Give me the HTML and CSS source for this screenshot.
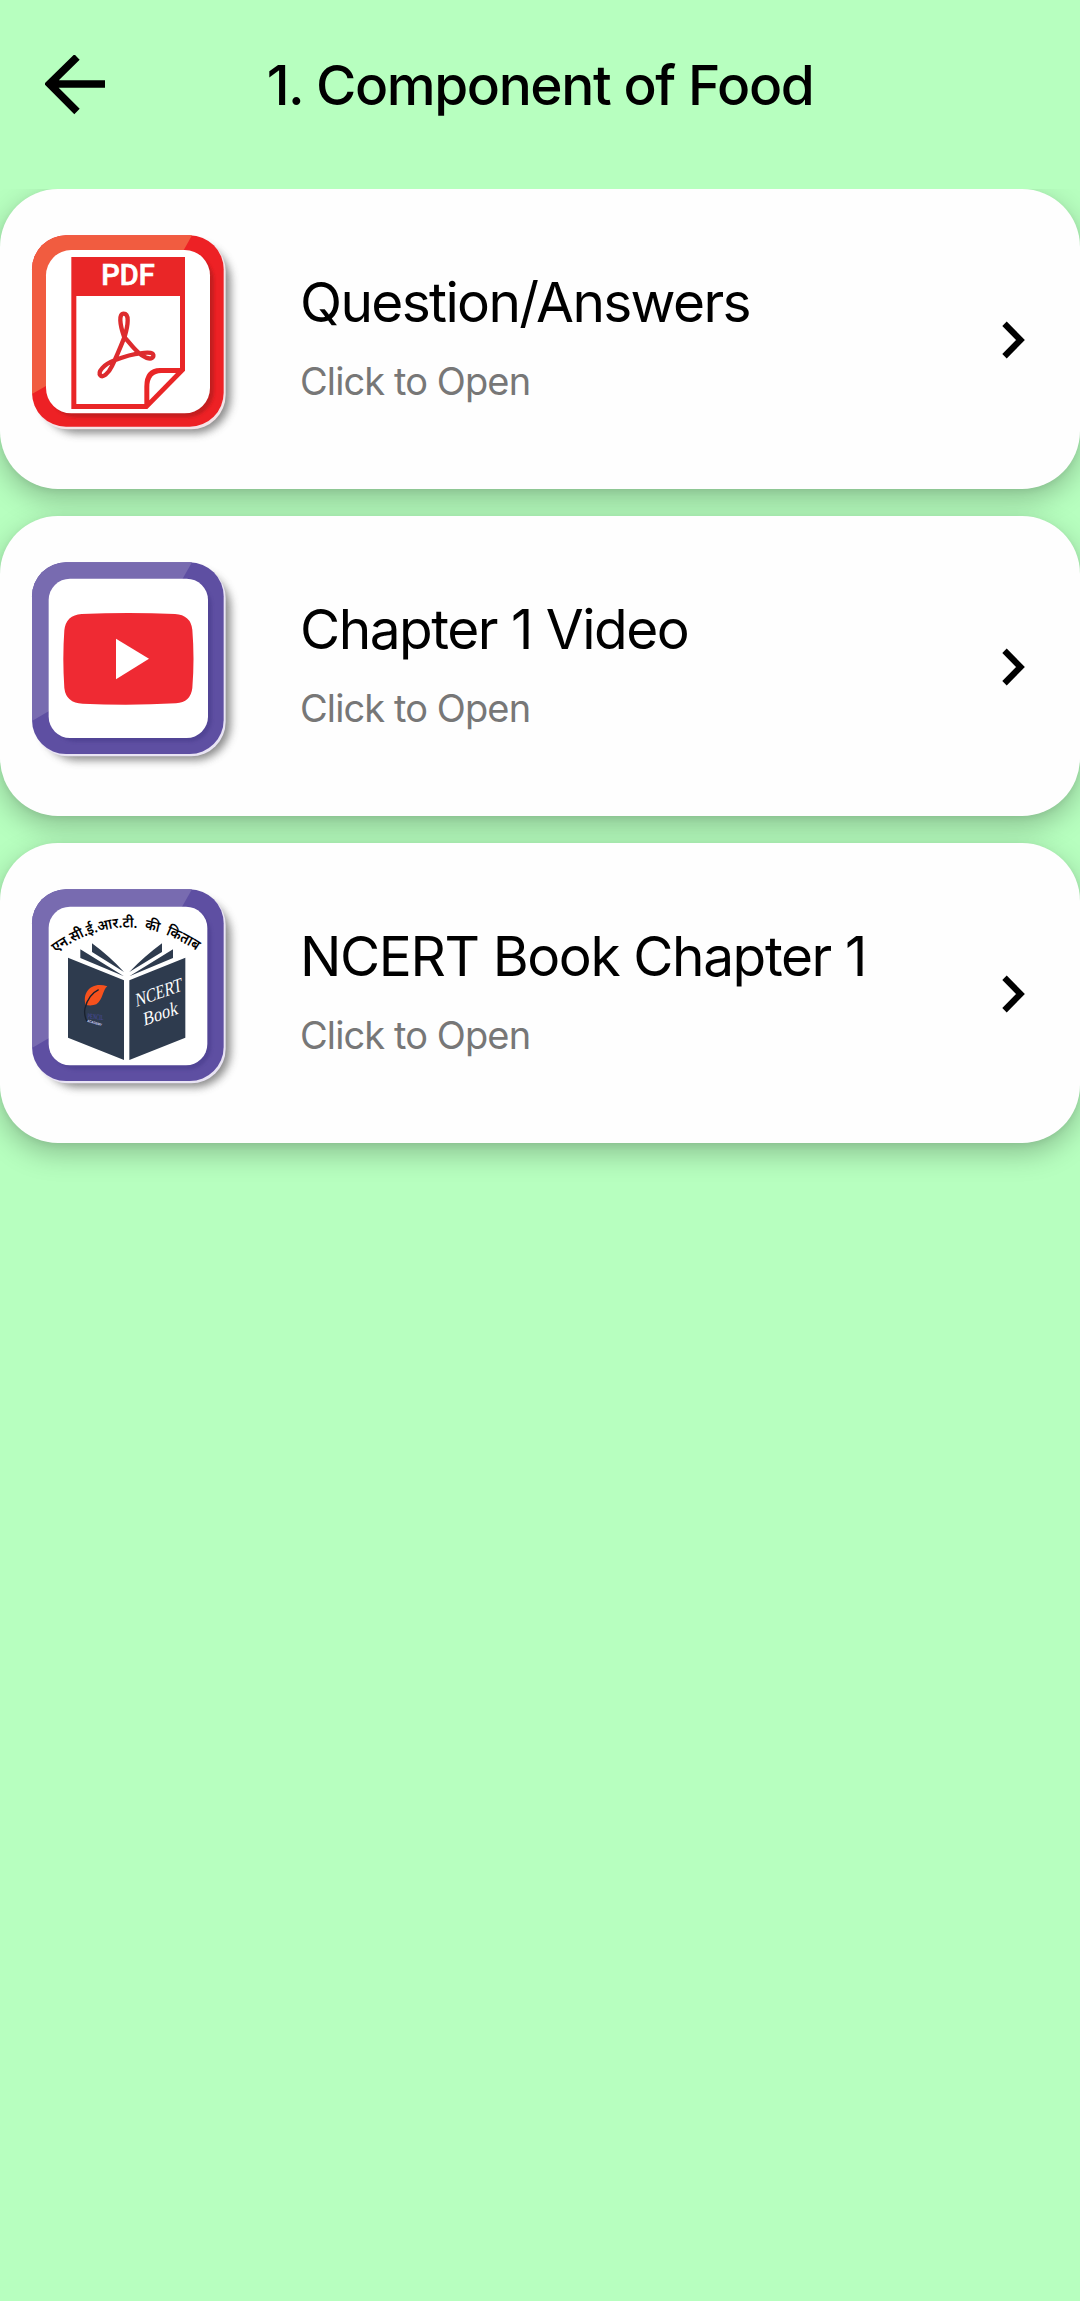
FILE: index.html
```html
<!DOCTYPE html>
<html lang="en">
<head>
<meta charset="utf-8">
<meta name="viewport" content="width=device-width">
<title>1. Component of Food</title>
<link rel="stylesheet" href="styles.css">
</head>
<body>
<header class="bar">
  <svg class="back" viewBox="0 0 60 60"><path d="M32 2 4.500 29 32 56.500M5 29H60" fill="none" stroke="#000" stroke-width="7.600"/></svg>
  <h1 class="title">1. Component of Food</h1>
</header>
<main class="list">
  <a class="card">
    <svg class="icon" viewBox="0 0 690 675">
      <defs>
        <filter id="soft" x="-20%" y="-20%" width="140%" height="140%"><feGaussianBlur stdDeviation="13"/></filter>
        <filter id="inner" x="-20%" y="-20%" width="140%" height="140%"><feGaussianBlur stdDeviation="4"/></filter>
      </defs>
      <rect x="66" y="74" width="566" height="566" rx="108" fill="#777" opacity=".85" filter="url(#soft)"/>
      <rect x="40" y="50" width="577" height="578" rx="104" fill="#f3e4e8"/>
      <rect x="36" y="46" width="575" height="574" rx="102" fill="#ed2125"/>
      <path d="M36 522V148A102 102 0 0 1 138 46H516L490 92 78 498Z" fill="#f15c40"/>
      <rect x="90" y="102" width="492" height="490" rx="80" fill="#b51a1e" filter="url(#inner)" opacity=".75"/>
      <rect x="78" y="90" width="492" height="490" rx="76" fill="#fff"/>
      <path d="M154 111H495V452L382 567H154ZM169 228V552H373V500Q373 445 420 444H480V228Z" fill="#e92627" fill-rule="evenodd"/>
      <path d="M388 541V500Q388 460 424 459H468Z" fill="#fff"/>
      <text class="pdf" x="324" y="196" text-anchor="middle" textLength="160" lengthAdjust="spacingAndGlyphs">PDF</text>
      <path d="M312 350C299 312 296 281 311 281C328 281 325 312 314 350C302 380 290 410 276 438C265 461 248 475 241 466C233 455 250 434 284 421C312 410 337 402 361 400C388 395 403 398 400 409C394 422 370 414 348 391C331 374 319 357 312 350Z" fill="none" stroke="#dd2b2e" stroke-width="13" stroke-linejoin="round"/>
    </svg>
    <div class="texts"><h2 class="name n1">Question/Answers</h2><p class="hint">Click to Open</p></div>
    <svg class="chev" viewBox="0 0 24 38"><path d="M2.500 2.800 18.500 19 2.500 35.200" fill="none" stroke="#000" stroke-width="6.200"/></svg>
  </a>
  <a class="card">
    <svg class="icon" viewBox="0 6 690 675">
      <rect x="66" y="80" width="566" height="566" rx="108" fill="#777" opacity=".85" filter="url(#soft)"/>
      <rect x="40" y="56" width="577" height="578" rx="104" fill="#e9e4f4"/>
      <rect x="36" y="52" width="575" height="575" rx="102" fill="#5e4fa2"/>
      <path d="M36 528V154A102 102 0 0 1 138 52H516L487 103 86 499Z" fill="#786bb0"/>
      <rect x="98" y="113" width="478" height="478" rx="70" fill="#4a3c8d" filter="url(#inner)" opacity=".6"/>
      <rect x="86" y="101" width="478" height="478" rx="64" fill="#fff"/>
      <path d="M185 207Q325 201 465 207Q512 210 517 254Q524 340 517 429Q512 472 468 475Q325 483 188 476Q138 474 133 429Q127 340 133 256Q138 210 185 207Z" fill="#ef2a33"/>
      <path d="M288 281 387 341 288 403Z" fill="#fff"/>
    </svg>
    <div class="texts"><h2 class="name n2">Chapter 1 Video</h2><p class="hint">Click to Open</p></div>
    <svg class="chev" viewBox="0 0 24 38"><path d="M2.500 2.800 18.500 19 2.500 35.200" fill="none" stroke="#000" stroke-width="6.200"/></svg>
  </a>
  <a class="card">
    <svg class="icon" viewBox="0 -3 690 675">
      <rect x="66" y="71" width="566" height="566" rx="108" fill="#777" opacity=".85" filter="url(#soft)"/>
      <rect x="40" y="47" width="577" height="578" rx="104" fill="#e9e4f4"/>
      <rect x="36" y="43" width="575" height="575" rx="102" fill="#5e4fa2"/>
      <path d="M36 519V145A102 102 0 0 1 138 43H516L487 94 86 490Z" fill="#786bb0"/>
      <rect x="98" y="106" width="476" height="478" rx="70" fill="#4a3c8d" filter="url(#inner)" opacity=".6"/>
      <rect x="86" y="95" width="476" height="476" rx="64" fill="#fff"/>
      <path id="arc" d="M107 234Q320 82 536 232" fill="none"/>
      <text class="hindi"><textPath href="#arc" textLength="454" lengthAdjust="spacingAndGlyphs">एन.सी.ई.आर.टी.&#160; की&#160; किताब</textPath></text>
      <path d="M144 248 312 316V555L144 488ZM496 248 328 316V555L496 488ZM181 223 312 304 181 249ZM216 205Q270 245 312 291L216 231ZM459 223 328 304 459 249ZM426 205Q372 245 328 291L426 231Z" fill="#2e3b4e"/>
      <path d="M197 390C186 352 214 319 262 334C248 344 250 373 229 388Q216 393 197 390Z" fill="#f6511d"/>
      <path d="M236 344C213 355 201 375 195 400Q191 420 201 439" fill="none" stroke="#19212e" stroke-width="4"/>
      <text class="mark" x="202" y="430" textLength="48" lengthAdjust="spacingAndGlyphs" transform="rotate(6 202 430)">PENCIL</text>
      <text class="sub" x="201" y="440" textLength="46" lengthAdjust="spacingAndGlyphs" transform="rotate(17 201 440)">ACADEMY</text>
      <text class="book" transform="matrix(1 -.36 .08 1 349 396)" textLength="139" lengthAdjust="spacingAndGlyphs">NCERT</text>
      <text class="book" transform="matrix(1 -.36 .08 1 372 453)" textLength="103" lengthAdjust="spacingAndGlyphs">Book</text>
    </svg>
    <div class="texts"><h2 class="name n3">NCERT Book Chapter 1</h2><p class="hint">Click to Open</p></div>
    <svg class="chev" viewBox="0 0 24 38"><path d="M2.500 2.800 18.500 19 2.500 35.200" fill="none" stroke="#000" stroke-width="6.200"/></svg>
  </a>
</main>
</body>
</html>
```
FILE: styles.css
```css
* { box-sizing: border-box; margin: 0; }
body {
  display: flex;
  flex-direction: column;
  min-height: 2301px;
  background: #b7ffbf;
  font-family: Inter, "Liberation Sans", sans-serif;
  color: #000;
}
.bar {
  display: grid;
  grid-template-columns: 60px 1fr 60px;
  align-items: center;
  height: 189px;
  padding: 0 45px 20px;
}
.back { width: 60px; height: 60px; }
.title {
  font-size: 55px;
  font-weight: 500;
  line-height: 66px;
  letter-spacing: -1.4px;
  text-align: center;
  white-space: nowrap;
}
.list {
  display: flex;
  flex-direction: column;
  flex: 1;
  gap: 27px;
  overflow: hidden;
}
.card {
  display: flex;
  align-items: center;
  height: 300px;
  padding: 0 54px 0 20px;
  border-radius: 58px;
  background: #fefefe;
  box-shadow: 0 10px 28px rgba(0, 0, 0, .25), 0 2px 6px rgba(0, 0, 0, .06);
}
.icon { width: 230px; height: 225px; margin-bottom: 13px; }
.texts { flex: 1; padding-left: 50px; }
.name {
  font-size: 55px;
  font-weight: 400;
  line-height: 66px;
  white-space: nowrap;
}
.n1 { letter-spacing: -1.65px; }
.n2 { letter-spacing: -1.5px; }
.n3 { letter-spacing: -1.4px; }
.hint {
  margin: 23px 0 6px;
  font-size: 38px;
  line-height: 46px;
  letter-spacing: -.9px;
  color: #777;
}
.chev { width: 24px; height: 38px; margin-top: 1px; }
.pdf { font: 500 86px Roboto, sans-serif; fill: #fff; stroke: #fff; stroke-width: 2px; }
.hindi { font: 600 44px "Noto Sans", sans-serif; fill: #000; }
.mark { font: 22px "Liberation Serif", serif; fill: #4d4ca6; }
.sub { font: 700 10px Inter, sans-serif; fill: #c9c9ee; }
.book { font: 58px "Liberation Serif", serif; fill: #fff; }
```
